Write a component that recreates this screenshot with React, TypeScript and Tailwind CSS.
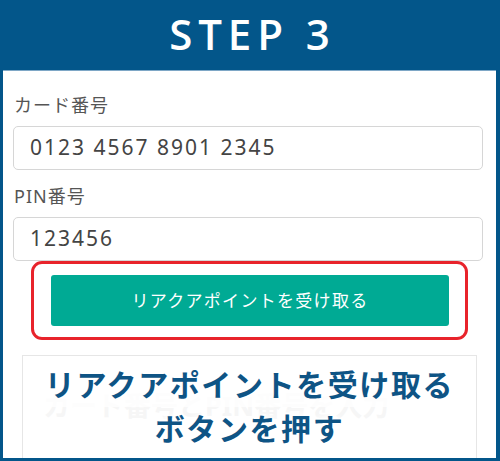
const jp = "font-['Noto_Sans','Noto_Sans_CJK_JP',sans-serif]";

function Field({ label, value, top }: { label: string; value: string; top: string }) {
  return (
    <div className={top}>
      <p className="text-[18px] leading-[24px] tracking-[1px] text-[#555] pl-[1px]">{label}</p>
      <div className="mt-[9px] h-[44px] rounded-[5px] border border-[#d6d6d6] flex items-center pl-[16px] text-[21px] tracking-[2px] text-[#444]">
        {value}
      </div>
    </div>
  );
}

export default function App() {
  return (
    <div className={`w-[500px] h-[461px] bg-[#03568a] flex flex-col pl-[3px] pr-[4px] pb-[3px] ${jp}`}>
      {/* Header */}
      <div className="h-[70px] flex items-center justify-center">
        <h1 className="font-['Open_Sans',sans-serif] font-semibold text-[42px] leading-none tracking-[0.14em] text-white pl-[0.14em] pb-[2px]">
          STEP 3
        </h1>
      </div>

      {/* Panel */}
      <div className="relative flex-1 bg-white border-t border-[#7ea7c6] pl-[10px] pr-[13px] flex flex-col overflow-hidden">
        <Field label="カード番号" value="0123 4567 8901 2345" top="pt-[22px]" />
        <Field label="PIN番号" value="123456" top="pt-[14px]" />

        {/* Highlighted button */}
        <div className="ml-[18px] mr-[15px] border-[3px] border-[#e8232b] rounded-[11px] pt-[11px] pb-[11px] pl-[17px] pr-[16px]">
          <button className="w-full h-[51px] rounded-[3px] bg-[#00aa94] text-white text-[17px] tracking-[1.3px] flex items-center justify-center">
            リアクアポイントを受け取る
          </button>
        </div>

        {/* Faded next screen */}
        <div className="mt-[15px] ml-[9px] mr-[6px] flex-1 border-t border-x border-[#e6e6e6] pt-[30px] pl-[20px]">
          <p className="text-[27px] font-bold text-[#f6f6f6] whitespace-nowrap">カード番号とPIN番号を入力</p>
        </div>

        {/* Caption */}
        <div className="absolute left-0 right-0 top-[292px] flex flex-col items-center text-[30px] font-bold leading-[44px] tracking-[1.6px] text-[#0e5485] [text-shadow:0_0_6px_#fff,0_0_10px_#fff,0_0_14px_#fff]">
          <p className="bg-white/80 px-[4px]">リアクアポイントを受け取る</p>
          <p>ボタンを押す</p>
        </div>
      </div>
    </div>
  );
}
